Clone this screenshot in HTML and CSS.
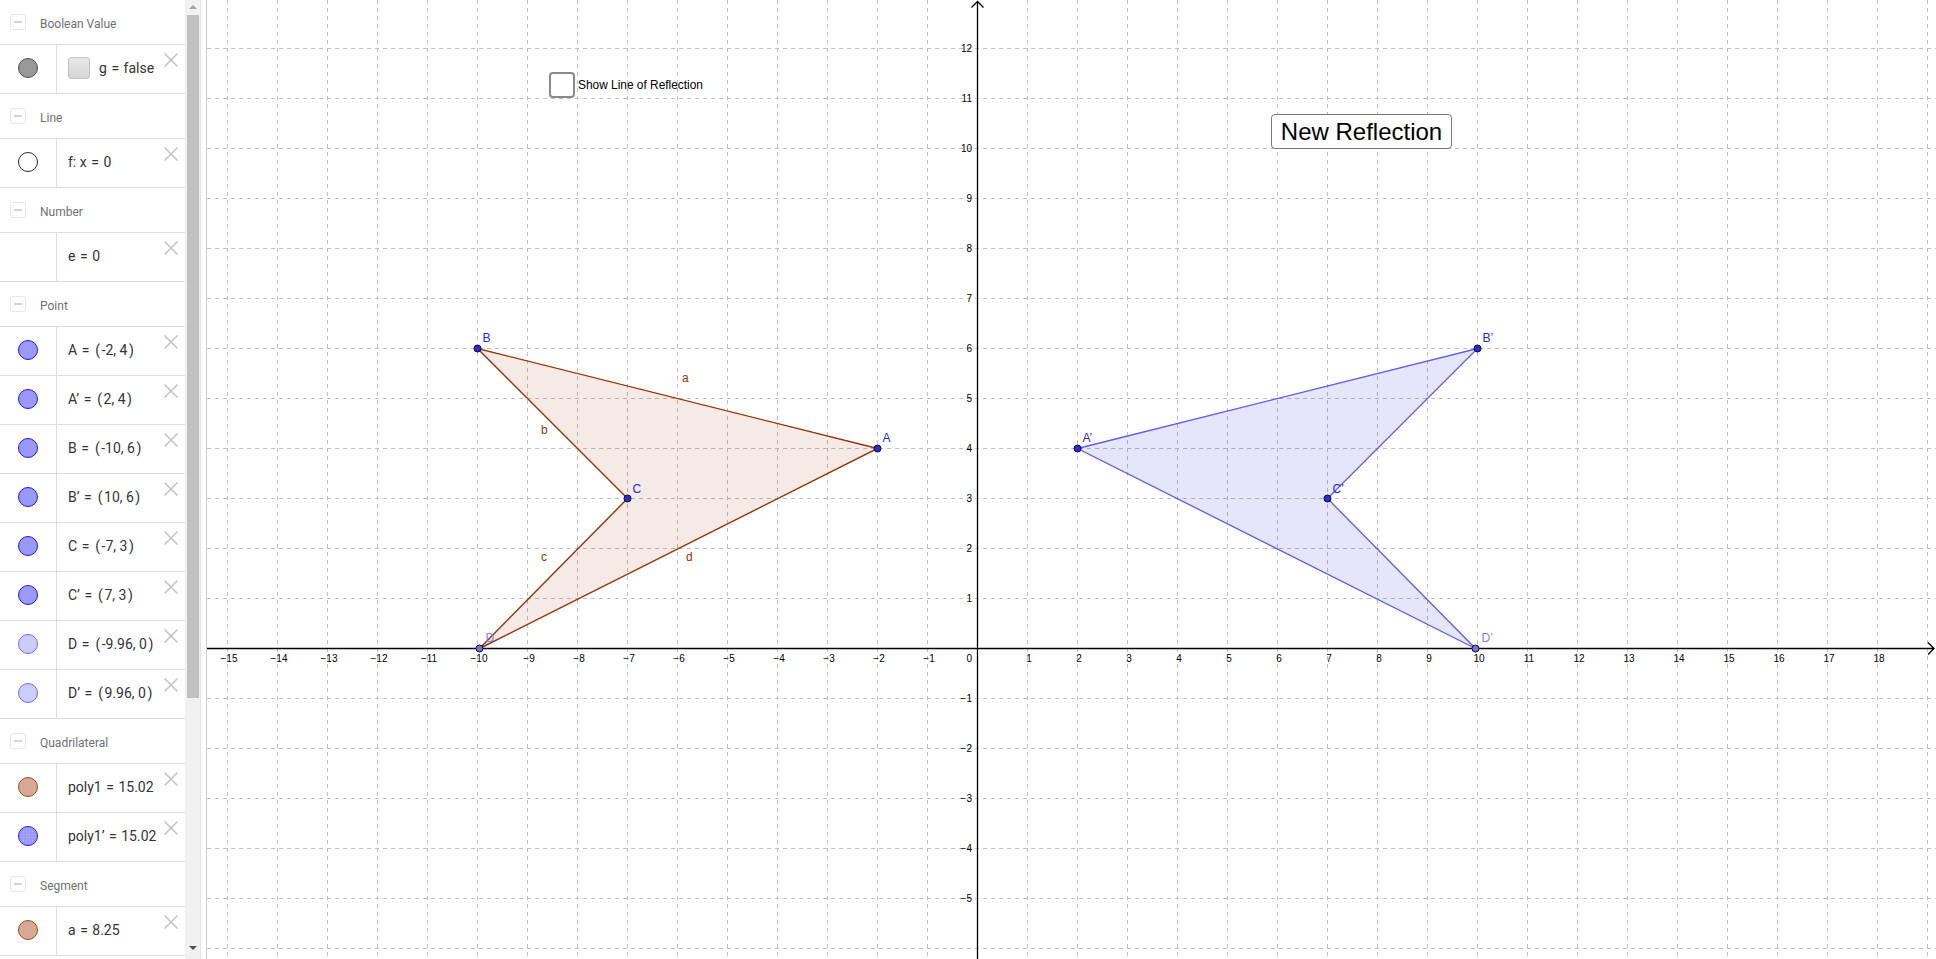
FILE: index.html
```html
<!DOCTYPE html>
<html>
<head>
<meta charset="utf-8">
<title>Reflection</title>
<link rel="stylesheet" href="styles.css">
</head>
<body>
<aside class="algebra">
  <div class="av-list">
    <div class="av-inner">
      <div class="group-header"><span class="collapse"></span><span class="group-title">Boolean Value</span></div>
      <div class="item">
        <div class="marble-cell"><span class="marble m-gray"></span></div>
        <div class="item-body"><span class="bool-box"></span><span class="expr">g<span class="eq">=</span>false</span></div>
        <svg class="delete" viewBox="0 0 16 16"><path d="M1.5 1.5L14.5 14.5M14.5 1.5L1.5 14.5"/></svg>
      </div>
      <div class="group-header"><span class="collapse"></span><span class="group-title">Line</span></div>
      <div class="item">
        <div class="marble-cell"><span class="marble m-white"></span></div>
        <div class="item-body"><span class="expr">f: x<span class="eq">=</span>0</span></div>
        <svg class="delete" viewBox="0 0 16 16"><path d="M1.5 1.5L14.5 14.5M14.5 1.5L1.5 14.5"/></svg>
      </div>
      <div class="group-header"><span class="collapse"></span><span class="group-title">Number</span></div>
      <div class="item">
        <div class="marble-cell"></div>
        <div class="item-body"><span class="expr">e<span class="eq">=</span>0</span></div>
        <svg class="delete" viewBox="0 0 16 16"><path d="M1.5 1.5L14.5 14.5M14.5 1.5L1.5 14.5"/></svg>
      </div>
      <div class="group-header"><span class="collapse"></span><span class="group-title">Point</span></div>
      <div class="item">
        <div class="marble-cell"><span class="marble m-blue"></span></div>
        <div class="item-body"><span class="expr">A<span class="eq">=</span><span class="paren">(</span>-2, 4<span class="paren">)</span></span></div>
        <svg class="delete" viewBox="0 0 16 16"><path d="M1.5 1.5L14.5 14.5M14.5 1.5L1.5 14.5"/></svg>
      </div>
      <div class="item">
        <div class="marble-cell"><span class="marble m-blue"></span></div>
        <div class="item-body"><span class="expr">A’<span class="eq">=</span><span class="paren">(</span>2, 4<span class="paren">)</span></span></div>
        <svg class="delete" viewBox="0 0 16 16"><path d="M1.5 1.5L14.5 14.5M14.5 1.5L1.5 14.5"/></svg>
      </div>
      <div class="item">
        <div class="marble-cell"><span class="marble m-blue"></span></div>
        <div class="item-body"><span class="expr">B<span class="eq">=</span><span class="paren">(</span>-10, 6<span class="paren">)</span></span></div>
        <svg class="delete" viewBox="0 0 16 16"><path d="M1.5 1.5L14.5 14.5M14.5 1.5L1.5 14.5"/></svg>
      </div>
      <div class="item">
        <div class="marble-cell"><span class="marble m-blue"></span></div>
        <div class="item-body"><span class="expr">B’<span class="eq">=</span><span class="paren">(</span>10, 6<span class="paren">)</span></span></div>
        <svg class="delete" viewBox="0 0 16 16"><path d="M1.5 1.5L14.5 14.5M14.5 1.5L1.5 14.5"/></svg>
      </div>
      <div class="item">
        <div class="marble-cell"><span class="marble m-blue"></span></div>
        <div class="item-body"><span class="expr">C<span class="eq">=</span><span class="paren">(</span>-7, 3<span class="paren">)</span></span></div>
        <svg class="delete" viewBox="0 0 16 16"><path d="M1.5 1.5L14.5 14.5M14.5 1.5L1.5 14.5"/></svg>
      </div>
      <div class="item">
        <div class="marble-cell"><span class="marble m-blue"></span></div>
        <div class="item-body"><span class="expr">C’<span class="eq">=</span><span class="paren">(</span>7, 3<span class="paren">)</span></span></div>
        <svg class="delete" viewBox="0 0 16 16"><path d="M1.5 1.5L14.5 14.5M14.5 1.5L1.5 14.5"/></svg>
      </div>
      <div class="item">
        <div class="marble-cell"><span class="marble m-light"></span></div>
        <div class="item-body"><span class="expr">D<span class="eq">=</span><span class="paren">(</span>-9.96, 0<span class="paren">)</span></span></div>
        <svg class="delete" viewBox="0 0 16 16"><path d="M1.5 1.5L14.5 14.5M14.5 1.5L1.5 14.5"/></svg>
      </div>
      <div class="item">
        <div class="marble-cell"><span class="marble m-light"></span></div>
        <div class="item-body"><span class="expr">D’<span class="eq">=</span><span class="paren">(</span>9.96, 0<span class="paren">)</span></span></div>
        <svg class="delete" viewBox="0 0 16 16"><path d="M1.5 1.5L14.5 14.5M14.5 1.5L1.5 14.5"/></svg>
      </div>
      <div class="group-header"><span class="collapse"></span><span class="group-title">Quadrilateral</span></div>
      <div class="item">
        <div class="marble-cell"><span class="marble m-brown"></span></div>
        <div class="item-body"><span class="expr">poly1<span class="eq">=</span>15.02</span></div>
        <svg class="delete" viewBox="0 0 16 16"><path d="M1.5 1.5L14.5 14.5M14.5 1.5L1.5 14.5"/></svg>
      </div>
      <div class="item">
        <div class="marble-cell"><span class="marble m-dots"></span></div>
        <div class="item-body"><span class="expr">poly1’<span class="eq">=</span>15.02</span></div>
        <svg class="delete" viewBox="0 0 16 16"><path d="M1.5 1.5L14.5 14.5M14.5 1.5L1.5 14.5"/></svg>
      </div>
      <div class="group-header"><span class="collapse"></span><span class="group-title">Segment</span></div>
      <div class="item">
        <div class="marble-cell"><span class="marble m-brown"></span></div>
        <div class="item-body"><span class="expr">a<span class="eq">=</span>8.25</span></div>
        <svg class="delete" viewBox="0 0 16 16"><path d="M1.5 1.5L14.5 14.5M14.5 1.5L1.5 14.5"/></svg>
      </div>
    </div>
  </div>
  <div class="av-scroll">
    <span class="arrow-up"></span>
    <span class="thumb"></span>
    <span class="arrow-down"></span>
  </div>
</aside>
<div class="splitter"></div>
<main class="canvas">
  <svg class="graph" width="1729" height="959" viewBox="207 0 1729 959">
    <path class="grid" d="M227.5 0V959M277.5 0V959M327.5 0V959M377.5 0V959M427.5 0V959M477.5 0V959M527.5 0V959M577.5 0V959M627.5 0V959M677.5 0V959M727.5 0V959M777.5 0V959M827.5 0V959M877.5 0V959M927.5 0V959M1027.5 0V959M1077.5 0V959M1127.5 0V959M1177.5 0V959M1227.5 0V959M1277.5 0V959M1327.5 0V959M1377.5 0V959M1427.5 0V959M1477.5 0V959M1527.5 0V959M1577.5 0V959M1627.5 0V959M1677.5 0V959M1727.5 0V959M1777.5 0V959M1827.5 0V959M1877.5 0V959M1927.5 0V959"/>
    <path class="grid" d="M207 48.5H1936M207 98.5H1936M207 148.5H1936M207 198.5H1936M207 248.5H1936M207 298.5H1936M207 348.5H1936M207 398.5H1936M207 448.5H1936M207 498.5H1936M207 548.5H1936M207 598.5H1936M207 698.5H1936M207 748.5H1936M207 798.5H1936M207 848.5H1936M207 898.5H1936M207 948.5H1936"/>
    <path class="axis" d="M207 648.5H1934M1928 642.5L1934 648.5L1928 654.5M977.5 959V1.5M971.5 7.5L977.5 1.5L983.5 7.5"/>
    <g class="xlabels">
      <text x="229" y="662">−15</text><text x="279" y="662">−14</text><text x="329" y="662">−13</text><text x="379" y="662">−12</text><text x="429" y="662">−11</text><text x="479" y="662">−10</text><text x="529" y="662">−9</text><text x="579" y="662">−8</text><text x="629" y="662">−7</text><text x="679" y="662">−6</text><text x="729" y="662">−5</text><text x="779" y="662">−4</text><text x="829" y="662">−3</text><text x="879" y="662">−2</text><text x="929" y="662">−1</text>
      <text x="1029" y="662">1</text><text x="1079" y="662">2</text><text x="1129" y="662">3</text><text x="1179" y="662">4</text><text x="1229" y="662">5</text><text x="1279" y="662">6</text><text x="1329" y="662">7</text><text x="1379" y="662">8</text><text x="1429" y="662">9</text><text x="1479" y="662">10</text><text x="1529" y="662">11</text><text x="1579" y="662">12</text><text x="1629" y="662">13</text><text x="1679" y="662">14</text><text x="1729" y="662">15</text><text x="1779" y="662">16</text><text x="1829" y="662">17</text><text x="1879" y="662">18</text>
    </g>
    <g class="ylabels">
      <text x="972" y="52">12</text><text x="972" y="102">11</text><text x="972" y="152">10</text><text x="972" y="202">9</text><text x="972" y="252">8</text><text x="972" y="302">7</text><text x="972" y="352">6</text><text x="972" y="402">5</text><text x="972" y="452">4</text><text x="972" y="502">3</text><text x="972" y="552">2</text><text x="972" y="602">1</text>
      <text x="972" y="662">0</text>
      <text x="972" y="702">−1</text><text x="972" y="752">−2</text><text x="972" y="802">−3</text><text x="972" y="852">−4</text><text x="972" y="902">−5</text>
    </g>
    <polygon class="poly-orig" points="877.5,448.5 477.5,348.5 627.5,498.5 479.5,648.5"/>
    <polygon class="poly-image" points="1077.5,448.5 1477.5,348.5 1327.5,498.5 1475.5,648.5"/>
    <g class="seg-labels">
      <text x="682" y="382">a</text>
      <text x="541" y="434">b</text>
      <text x="541" y="561">c</text>
      <text x="686" y="561">d</text>
    </g>
    <g class="pts">
      <circle cx="877.5" cy="448.5" r="3.5"/>
      <circle cx="477.5" cy="348.5" r="3.5"/>
      <circle cx="627.5" cy="498.5" r="3.5"/>
      <circle cx="1077.5" cy="448.5" r="3.5"/>
      <circle cx="1477.5" cy="348.5" r="3.5"/>
      <circle cx="1327.5" cy="498.5" r="3.5"/>
    </g>
    <g class="pts pts-free">
      <circle cx="479.5" cy="648.5" r="3.5"/>
      <circle cx="1475.5" cy="648.5" r="3.5"/>
    </g>
    <g class="pt-labels">
      <text x="882.5" y="442">A</text>
      <text x="482.5" y="342">B</text>
      <text x="632.5" y="492.5">C</text>
      <text x="1082.5" y="442">A’</text>
      <text x="1482.5" y="342">B’</text>
      <text x="1332.5" y="492.5">C’</text>
    </g>
    <g class="pt-labels pt-labels-free">
      <text x="485.5" y="641.5">D</text>
      <text x="1481.5" y="641.5">D’</text>
    </g>
  </svg>
  <label class="reflect-toggle"><span class="tbox"></span><span class="tlabel">Show Line of Reflection</span></label>
  <button class="new-btn">New Reflection</button>
</main>
</body>
</html>
```

FILE: styles.css
```css
* { box-sizing: border-box; }
html, body { margin: 0; padding: 0; }
body {
  width: 1936px;
  height: 959px;
  overflow: hidden;
  display: flex;
  background: #ffffff;
  font-family: Roboto, "Noto Sans", sans-serif;
}

/* ---------- Algebra view ---------- */
.algebra {
  flex: none;
  width: 200px;
  height: 959px;
  display: flex;
}
.av-list {
  width: 185px;
  height: 959px;
  overflow: hidden;
  background: #ffffff;
}

.group-header {
  height: 45px;
  border-bottom: 1px solid #dddddd;
  display: flex;
  align-items: center;
  padding-left: 10px;
}
.collapse {
  width: 16px;
  height: 16px;
  border: 1px solid #e6e6e6;
  border-radius: 3px;
  display: flex;
  align-items: center;
  justify-content: center;
}
.collapse::before {
  content: "";
  width: 8px;
  height: 2px;
  background: #d4d4d4;
}
.group-title {
  margin-left: 14px;
  padding-top: 4px;
  font-size: 12px;
  color: #6f6f6f;
}

.item {
  height: 49px;
  border-bottom: 1px solid #dddddd;
  display: flex;
}
.marble-cell {
  flex: none;
  width: 57px;
  padding-bottom: 3px;
  border-right: 1px solid #dddddd;
  display: flex;
  align-items: center;
  justify-content: center;
}
.marble {
  width: 20px;
  height: 20px;
  border-radius: 50%;
  border: 1px solid #333333;
}
.m-gray { background: #999999; border-color: #4d4d4d; }
.m-white { background: #ffffff; border-color: #2b2b2b; }
.m-blue { background: #9999ff; border-color: #1a1aff; }
.m-light { background: #ccccff; border-color: #6b6bff; }
.m-brown { background: #d6a994; border-color: #a04a22; }
.m-dots {
  background-color: #9999ff;
  background-image: radial-gradient(#b9b9ff 0.8px, transparent 1px);
  background-size: 3px 3px;
  border-color: #1a1aff;
}

.item-body {
  flex: 1;
  display: flex;
  align-items: center;
  padding-left: 11px;
  padding-bottom: 3px;
  font-size: 14px;
  color: #333333;
  white-space: nowrap;
}
.eq { margin: 0 4.5px; }
.paren { margin: 0 1.5px; }
.bool-box {
  width: 22px;
  height: 22px;
  margin-right: 9px;
  border: 1px solid #c4c4c4;
  border-radius: 3px;
  background: linear-gradient(#e8e8e8, #d6d6d6);
}
.delete {
  flex: none;
  align-self: flex-start;
  width: 16px;
  height: 16px;
  margin-top: 7px;
  margin-right: 6px;
}
.delete path {
  fill: none;
  stroke: #c2c2c2;
  stroke-width: 1.5;
}

.av-scroll {
  width: 15px;
  height: 959px;
  background: #f1f1f1;
  display: flex;
  flex-direction: column;
  align-items: center;
}
.arrow-up {
  margin-top: 5px;
  width: 0;
  height: 0;
  border-left: 4px solid transparent;
  border-right: 4px solid transparent;
  border-bottom: 4px solid #a3a3a3;
}
.thumb {
  margin-top: 6px;
  width: 12px;
  height: 683px;
  background: #c1c1c1;
}
.arrow-down {
  margin-top: auto;
  margin-bottom: 9px;
  width: 0;
  height: 0;
  border-left: 4px solid transparent;
  border-right: 4px solid transparent;
  border-top: 4px solid #505050;
}

.splitter {
  flex: none;
  width: 7px;
  height: 959px;
  border-left: 1px solid #e2e2e2;
  border-right: 1px solid #d0d0d0;
  background: #ffffff;
}

/* ---------- Graphics view ---------- */
.canvas {
  flex: 1;
  position: relative;
  height: 959px;
  overflow: hidden;
}
.graph { display: block; }
.grid {
  fill: none;
  stroke: #c0c0c0;
  stroke-width: 1;
  stroke-dasharray: 4 4;
}
.axis {
  fill: none;
  stroke: #000000;
  stroke-width: 1.3;
}
.xlabels text, .ylabels text {
  font-family: "Liberation Sans", Arial, sans-serif;
  font-size: 10px;
  fill: #000000;
}
.xlabels text { text-anchor: middle; }
.ylabels text { text-anchor: end; }

.poly-orig {
  fill: rgba(153, 51, 0, 0.1);
  stroke: #993300;
  stroke-width: 1.4;
}
.poly-image {
  fill: rgba(0, 0, 230, 0.1);
  stroke: #5c5cf2;
  stroke-width: 1.3;
}
.pts circle {
  fill: #2a2ad8;
  stroke: #0a0a30;
  stroke-width: 1;
}
.pts-free circle { fill: #7474d8; }

.pt-labels text, .seg-labels text {
  font-family: "Liberation Sans", Arial, sans-serif;
  font-size: 12px;
}
.pt-labels text { fill: #2424f0; }
.pt-labels-free text { fill: #7d7dff; }
.seg-labels text { fill: #993300; }

.reflect-toggle {
  position: absolute;
  left: 342px;
  top: 72px;
  display: flex;
  align-items: center;
  gap: 3px;
}
.tbox {
  width: 26px;
  height: 26px;
  border: 2px solid #8a8a8a;
  border-radius: 4px;
  background: #ffffff;
}
.tlabel {
  font-family: "Liberation Sans", Arial, sans-serif;
  font-size: 11.9px;
  color: #000000;
}
.new-btn {
  position: absolute;
  left: 1064px;
  top: 114px;
  width: 181px;
  height: 35px;
  padding: 0;
  border: 1.5px solid #777777;
  border-radius: 4px;
  background: #ffffff;
  font-family: "Liberation Sans", Arial, sans-serif;
  font-size: 24px;
  color: #000000;
  display: flex;
  align-items: center;
  justify-content: center;
}
```
